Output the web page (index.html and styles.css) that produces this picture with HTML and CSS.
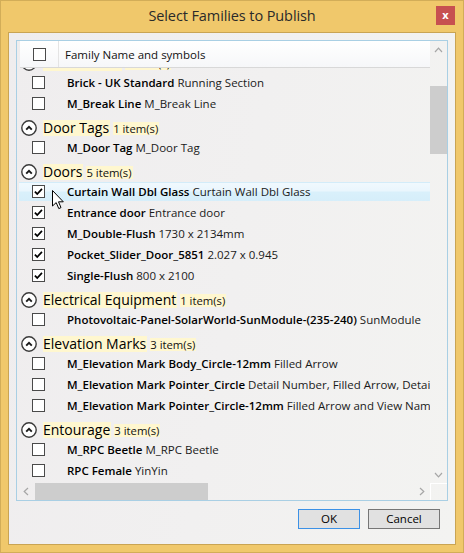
FILE: index.html
```html
<!DOCTYPE html>
<html>
<head>
<meta charset="utf-8">
<link rel="stylesheet" href="styles.css">
</head>
<body>
<div class="window">
  <div class="titlebar">
    <span class="title">Select Families to Publish</span>
    <div class="close">x</div>
  </div>
  <div class="client">
    <div class="listbox">
      <div class="list-main">
        <div class="list-view">
          <div class="header">
            <div class="hcell-check"><span class="cb"></span></div>
            <div class="hcell-name">Family Name and symbols</div>
          </div>
          <div class="body">
            <div class="content">
              <div class="group"><span class="gicon"><svg viewBox="0 0 16 16" width="16" height="16"><circle cx="8" cy="8" r="7.2" fill="#fff" stroke="#3a3a3a" stroke-width="1.4"/><path d="M5.2 9.6 L8 6.8 L10.8 9.6" fill="none" stroke="#1a1a1a" stroke-width="1.9"/></svg></span><span class="gname">Detail Items</span><span class="gcount">2 item(s)</span></div>
              <div class="item"><span class="cb"></span><span class="itext"><b>Brick - UK Standard</b> Running Section</span></div>
              <div class="item"><span class="cb"></span><span class="itext"><b>M_Break Line</b> M_Break Line</span></div>

              <div class="group"><span class="gicon"><svg viewBox="0 0 16 16" width="16" height="16"><circle cx="8" cy="8" r="7.2" fill="#fff" stroke="#3a3a3a" stroke-width="1.4"/><path d="M5.2 9.6 L8 6.8 L10.8 9.6" fill="none" stroke="#1a1a1a" stroke-width="1.9"/></svg></span><span class="gname">Door Tags</span><span class="gcount">1 item(s)</span></div>
              <div class="item"><span class="cb"></span><span class="itext"><b>M_Door Tag</b> M_Door Tag</span></div>

              <div class="group"><span class="gicon"><svg viewBox="0 0 16 16" width="16" height="16"><circle cx="8" cy="8" r="7.2" fill="#fff" stroke="#3a3a3a" stroke-width="1.4"/><path d="M5.2 9.6 L8 6.8 L10.8 9.6" fill="none" stroke="#1a1a1a" stroke-width="1.9"/></svg></span><span class="gname">Doors</span><span class="gcount">5 item(s)</span></div>
              <div class="item selected"><span class="cb checked"><svg viewBox="0 0 13 13" width="11" height="11"><path d="M2.2 6.6 L5 9.4 L10.6 3.4" fill="none" stroke="#000" stroke-width="2"/></svg></span><span class="itext"><b>Curtain Wall Dbl Glass</b> Curtain Wall Dbl Glass</span></div>
              <div class="item"><span class="cb checked"><svg viewBox="0 0 13 13" width="11" height="11"><path d="M2.2 6.6 L5 9.4 L10.6 3.4" fill="none" stroke="#000" stroke-width="2"/></svg></span><span class="itext"><b>Entrance door</b> Entrance door</span></div>
              <div class="item"><span class="cb checked"><svg viewBox="0 0 13 13" width="11" height="11"><path d="M2.2 6.6 L5 9.4 L10.6 3.4" fill="none" stroke="#000" stroke-width="2"/></svg></span><span class="itext"><b>M_Double-Flush</b> 1730 x 2134mm</span></div>
              <div class="item"><span class="cb checked"><svg viewBox="0 0 13 13" width="11" height="11"><path d="M2.2 6.6 L5 9.4 L10.6 3.4" fill="none" stroke="#000" stroke-width="2"/></svg></span><span class="itext"><b>Pocket_Slider_Door_5851</b> 2.027 x 0.945</span></div>
              <div class="item"><span class="cb checked"><svg viewBox="0 0 13 13" width="11" height="11"><path d="M2.2 6.6 L5 9.4 L10.6 3.4" fill="none" stroke="#000" stroke-width="2"/></svg></span><span class="itext"><b>Single-Flush</b> 800 x 2100</span></div>

              <div class="group"><span class="gicon"><svg viewBox="0 0 16 16" width="16" height="16"><circle cx="8" cy="8" r="7.2" fill="#fff" stroke="#3a3a3a" stroke-width="1.4"/><path d="M5.2 9.6 L8 6.8 L10.8 9.6" fill="none" stroke="#1a1a1a" stroke-width="1.9"/></svg></span><span class="gname">Electrical Equipment</span><span class="gcount">1 item(s)</span></div>
              <div class="item"><span class="cb"></span><span class="itext"><b>Photovoltaic-Panel-SolarWorld-SunModule-(235-240)</b> SunModule</span></div>

              <div class="group"><span class="gicon"><svg viewBox="0 0 16 16" width="16" height="16"><circle cx="8" cy="8" r="7.2" fill="#fff" stroke="#3a3a3a" stroke-width="1.4"/><path d="M5.2 9.6 L8 6.8 L10.8 9.6" fill="none" stroke="#1a1a1a" stroke-width="1.9"/></svg></span><span class="gname">Elevation Marks</span><span class="gcount">3 item(s)</span></div>
              <div class="item"><span class="cb"></span><span class="itext"><b>M_Elevation Mark Body_Circle-12mm</b> Filled Arrow</span></div>
              <div class="item"><span class="cb"></span><span class="itext"><b>M_Elevation Mark Pointer_Circle</b> Detail Number, Filled Arrow, Detail Title</span></div>
              <div class="item"><span class="cb"></span><span class="itext"><b>M_Elevation Mark Pointer_Circle-12mm</b> Filled Arrow and View Name</span></div>

              <div class="group"><span class="gicon"><svg viewBox="0 0 16 16" width="16" height="16"><circle cx="8" cy="8" r="7.2" fill="#fff" stroke="#3a3a3a" stroke-width="1.4"/><path d="M5.2 9.6 L8 6.8 L10.8 9.6" fill="none" stroke="#1a1a1a" stroke-width="1.9"/></svg></span><span class="gname">Entourage</span><span class="gcount">3 item(s)</span></div>
              <div class="item"><span class="cb"></span><span class="itext"><b>M_RPC Beetle</b> M_RPC Beetle</span></div>
              <div class="item"><span class="cb"></span><span class="itext"><b>RPC Female</b> YinYin</span></div>
              <div class="item"><span class="cb"></span><span class="itext"><b>RPC Male</b> Alex</span></div>
            </div>
          </div>
        </div>
        <div class="vscroll">
          <div class="sbtn"><svg viewBox="0 0 9 6" width="9" height="6"><path d="M1 5 L4.5 1.2 L8 5" fill="none" stroke="#a6a6a6" stroke-width="1.2"/></svg></div>
          <div class="vtrack"><div class="vthumb"></div></div>
          <div class="sbtn"><svg viewBox="0 0 9 6" width="9" height="6"><path d="M1 1 L4.5 4.8 L8 1" fill="none" stroke="#a6a6a6" stroke-width="1.2"/></svg></div>
        </div>
      </div>
      <div class="hscroll">
        <div class="sbtn"><svg viewBox="0 0 6 9" width="6" height="9"><path d="M5 1 L1.2 4.5 L5 8" fill="none" stroke="#a6a6a6" stroke-width="1.2"/></svg></div>
        <div class="htrack"><div class="hthumb"></div></div>
        <div class="sbtn"><svg viewBox="0 0 6 9" width="6" height="9"><path d="M1 1 L4.8 4.5 L1 8" fill="none" stroke="#a6a6a6" stroke-width="1.2"/></svg></div>
        <div class="corner"></div>
      </div>
    </div>
    <div class="buttons">
      <div class="btn btn-ok">OK</div>
      <div class="btn btn-cancel">Cancel</div>
    </div>
  </div>
  <svg class="cursor" viewBox="0 0 13 20" width="13" height="20"><path d="M0.5 0.5 L0.5 16 L4.2 12.6 L6.8 18.6 L9 17.6 L6.5 11.8 L11.3 11.8 Z" fill="#fff" stroke="#000" stroke-width="1"/></svg>
</div>
</body>
</html>
```
FILE: styles.css
```css
* { box-sizing: border-box; }
html, body { margin: 0; padding: 0; }
body { width: 464px; height: 553px; overflow: hidden; font-family: "Open Sans", "Noto Sans", sans-serif; }

.window {
  position: relative;
  width: 464px; height: 553px;
  background: #f0c86b;
  box-shadow: inset 0 0 0 1px #d2ad58;
  padding: 0 8px 8px 8px;
  display: flex; flex-direction: column;
}
.titlebar {
  height: 32px; flex: none;
  position: relative;
  display: flex; align-items: center; justify-content: center;
}
.title { font-size: 14.5px; color: #2a2a2a; margin-top: -1px; letter-spacing: -0.1px; }
.close {
  position: absolute; right: 1px; top: 6px;
  width: 19px; height: 19px;
  background: #c75050; color: #fff;
  font-size: 11px; font-weight: 700; line-height: 17px; text-align: center;
}

.client {
  flex: 1;
  border: 1px solid #c9a453;
  background: linear-gradient(100deg, #efedee 0%, #f1f0f0 50%, #f3f3f1 100%);
  padding: 7px;
  display: flex; flex-direction: column;
}
.listbox {
  width: 432px; height: 461px;
  border: 1px solid #a9cfe4;
  display: flex; flex-direction: column;
}
.list-main { flex: 1; display: flex; min-height: 0; }
.list-view { flex: 1; display: flex; flex-direction: column; min-width: 0; }
.header {
  height: 27px; flex: none;
  margin-left: 3px;
  background: linear-gradient(#ffffff, #f6f7f9);
  border-bottom: 1px solid #d8d8d8;
  display: flex; align-items: center;
}
.hcell-check { width: 39px; height: 100%; border-right: 1px solid #e4e4e4; display: flex; align-items: center; padding-left: 13px; }
.hcell-name { padding-left: 6px; font-size: 11.5px; color: #111; }

.body { flex: 1; overflow: hidden; min-height: 0; }
.content { margin-top: -20px; padding-left: 2px; }

.cb {
  width: 13px; height: 13px; flex: none;
  border: 1px solid #4a4a4a; background: #fff;
  display: flex; align-items: center; justify-content: center;
}

.group {
  height: 23px; padding-top: 7px;
  display: flex; align-items: flex-end;
  white-space: nowrap;
}
.gicon { width: 16px; height: 16px; margin-left: 2px; display: block; flex: none; }
.gicon svg { display: block; }
.gname {
  margin-left: 6px;
  background: #fff7cf;
  font-size: 14px; line-height: 16px; height: 16px;
  color: #000; padding-right: 1px;
}
.gcount {
  margin-left: 3px;
  background: #fff7cf;
  font-size: 11.3px; line-height: 13px; height: 13px;
  color: #111; padding-right: 1px; margin-bottom: 1px;
}

.item {
  height: 19px; margin-top: 2px;
  display: flex; align-items: center;
  white-space: nowrap; overflow: hidden;
}
.item .cb { margin-left: 13px; }
.item.selected {
  background: linear-gradient(#f1f9fe 0%, #eaf6fd 45%, #d9f0fb 55%, #d6eefa 100%);
  box-shadow: inset 0 1px 0 #d3ecf9;
}
.itext { margin-left: 22px; font-size: 11.5px; color: #1a1a1a; }
.itext b { font-weight: 600; color: #000; }

.vscroll { width: 17px; flex: none; display: flex; flex-direction: column; }
.sbtn { width: 17px; height: 17px; flex: none; display: flex; align-items: center; justify-content: center; }
.vtrack { flex: 1; }
.vthumb { margin-top: 28px; height: 68px; background: #cdcdcd; }
.hscroll { height: 17px; flex: none; display: flex; }
.htrack { flex: 1; }
.hthumb { margin-left: 1px; width: 173px; height: 17px; background: #cdcdcd; }
.corner { width: 17px; height: 17px; flex: none; border-top: 1px solid #fff; border-left: 1px solid #fff; }

.buttons { display: flex; justify-content: flex-end; gap: 8px; margin-top: 8px; padding-right: 8px; }
.btn {
  height: 20px; background: #e1e1e1;
  font-size: 11.5px; color: #000; line-height: 18px; text-align: center;
}
.btn-ok { width: 62px; border: 1px solid #3c91e6; }
.btn-cancel { width: 72px; border: 1px solid #767676; }

.cursor { position: absolute; left: 52px; top: 190px; }
```
